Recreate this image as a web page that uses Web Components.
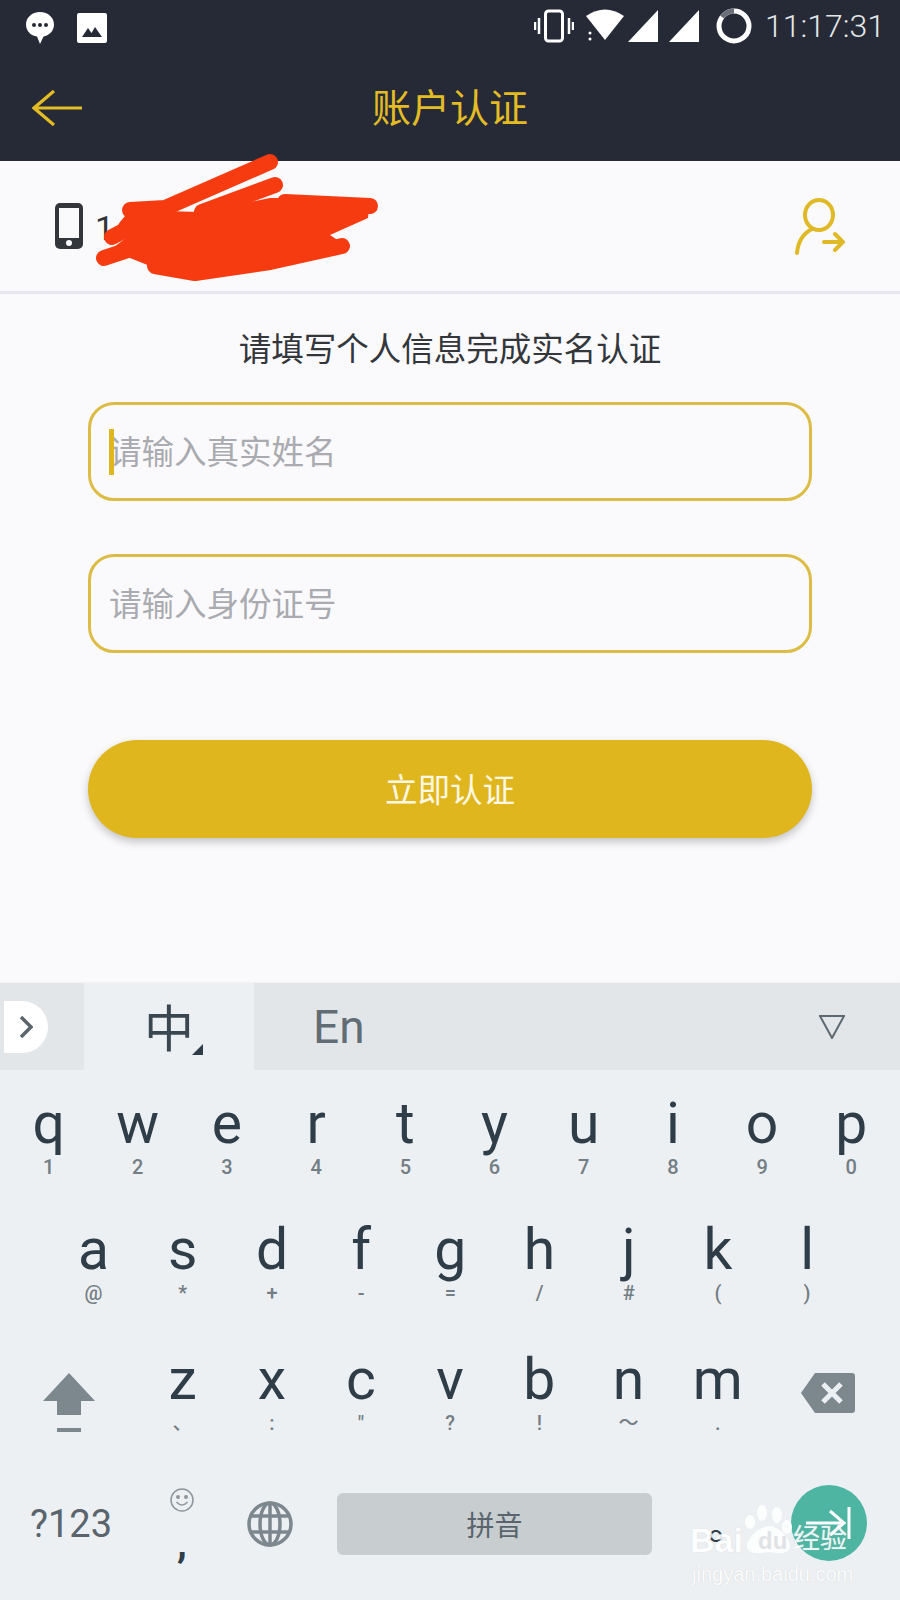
<!DOCTYPE html>
<html lang="zh">
<head>
<meta charset="utf-8">
<style>
  html, body { margin: 0; padding: 0; }
  body { width: 900px; height: 1600px; overflow: hidden; background: #fafafc; font-family: Roboto, "Noto Sans CJK SC", sans-serif; position: relative; }
</style>
</head>
<body>
<app-header title="账户认证"></app-header>
<account-row></account-row>
<auth-form></auth-form>
<ime-keyboard></ime-keyboard>
<baidu-mark></baidu-mark>

<script>
const CJK = 'Roboto, "Noto Sans CJK SC", sans-serif';

class AppHeader extends HTMLElement {
    constructor() {
        super();
        this.attachShadow({mode: 'open'});
        this.shadowRoot.innerHTML = `
        <style>
            :host { display: block; height: 161px; background: #252a36; color: #fff; }
            .status { height: 52px; display: flex; align-items: center; padding: 0 15px 0 25px; }
            .left { display: flex; gap: 22px; align-items: center; padding-top: 3px; }
            .right { margin-left: auto; display: flex; align-items: center; }
            .time { font: 300 32px Roboto, sans-serif; color: #e6e7e9; margin-left: 13px; }
            .bar { height: 109px; display: flex; align-items: center; position: relative; box-sizing: border-box; padding-bottom: 3px; }
            .back { margin-left: 32px; margin-top: 6px; }
            h1 { position: absolute; left: 0; right: 0; margin: 0; text-align: center; font: 400 39px ${CJK}; color: #e3bc25; }
        </style>
        <div class="status">
            <div class="left">
                <svg width="30" height="34" viewBox="0 0 30 34"><path d="M15 1C7 1 1 6.500 1 13.500 1 20 6 25 12 25.500L15 33 18.500 25.500C24.500 24.500 29 19.500 29 13.500 29 6.500 23 1 15 1Z" fill="#fff"/><circle cx="9" cy="14" r="2" fill="#252a36"/><circle cx="15" cy="14" r="2" fill="#252a36"/><circle cx="21" cy="14" r="2" fill="#252a36"/></svg>
                <svg width="30" height="30" viewBox="0 0 30 30"><rect width="30" height="30" rx="2" fill="#fff"/><path d="M5 24L11 15 14.500 20 18 14 25 24Z" fill="#252a36"/></svg>
            </div>
            <div class="right">
                <svg width="40" height="34" viewBox="0 0 40 34" fill="none" stroke="#fff"><rect x="11.500" y="2" width="17" height="30" rx="3" stroke-width="3"/><path d="M5 9v16M1 13v8M35 9v16M39 13v8" stroke-width="2.500"/></svg>
                <svg style="margin-left:12px" width="38" height="34" viewBox="0 0 38 34"><path d="M0 7Q19 -6 38 7L19 31Z" fill="#fff"/><circle cx="4" cy="24" r="1.500" fill="#fff"/><circle cx="4" cy="30" r="1.500" fill="#fff"/></svg>
                <svg style="margin-left:4px" width="30" height="32" viewBox="0 0 30 32"><path d="M30 0V32H0Z" fill="#fff"/></svg>
                <svg style="margin-left:11px" width="30" height="32" viewBox="0 0 30 32"><path d="M30 0V32H0Z" fill="#fff"/></svg>
                <svg style="margin-left:17px" width="36" height="36" viewBox="0 0 36 36" fill="none"><circle cx="18" cy="18" r="15" stroke="#fff" stroke-width="5"/><path d="M18 3A15 15 0 0 0 6 9" stroke="#6d7079" stroke-width="5"/></svg>
                <span class="time">11:17:31</span>
            </div>
        </div>
        <div class="bar">
            <svg class="back" width="50" height="38" viewBox="0 0 50 38" fill="none" stroke="#e3bc25" stroke-width="3.200"><path d="M22 2L2 19 22 36M2 19H50"/></svg>
            <h1></h1>
        </div>`;
    }

    connectedCallback() {
        this.shadowRoot.querySelector('h1').textContent = this.getAttribute('title');
    }
}

class AccountRow extends HTMLElement {
    constructor() {
        super();
        this.attachShadow({mode: 'open'});
        this.shadowRoot.innerHTML = `
        <style>
            :host { display: block; height: 133px; box-sizing: border-box; border-bottom: 3px solid #e6e6ee; position: relative; }
            .row { height: 100%; display: flex; align-items: center; padding: 0 55px 0 55px; box-sizing: border-box; }
            .num { font: 400 34px Roboto, sans-serif; color: #33363b; margin-left: 12px; padding-top: 4px; }
            .user { margin-left: auto; margin-top: 2px; }
            .scribble { position: absolute; left: 80px; top: -11px; }
        </style>
        <div class="row">
            <svg width="28" height="46" viewBox="0 0 28 46"><rect width="28" height="46" rx="5" fill="#33363b"/><rect x="4" y="5" width="20" height="30" fill="#fafafc"/><circle cx="14" cy="40" r="3" fill="#fafafc"/></svg>
            <span class="num">1</span>
            <svg class="user" width="50" height="58" viewBox="0 0 50 58" fill="none" stroke="#e0b927" stroke-width="4" stroke-linecap="round"><ellipse cx="24" cy="17" rx="14" ry="15"/><path d="M17 31C7 36 3 44 2 55M29 44H47M40 36L48 44 40 52" /></svg>
        </div>
        <svg class="scribble" width="320" height="140" viewBox="0 0 320 140" fill="none" stroke="#f73b10" stroke-width="16" stroke-linecap="round" stroke-linejoin="round">
            <path fill="#f73b10" stroke="none" d="M50 60L120 62 190 48 205 48 290 50 288 68 250 85 265 95 200 113 115 125 75 118 30 100 50 85 30 88 40 72Z"/>
            <path d="M190 12L85 58 50 60"/>
            <path d="M195 35L122 62"/>
            <path d="M205 52L290 56"/>
            <path d="M32 87L55 75"/>
            <path d="M24 108L60 96"/>
            <path d="M262 96L190 112 115 123 75 116"/>
        </svg>`;
    }
}

class FieldBox extends HTMLElement {
    constructor() {
        super();
        this.attachShadow({mode: 'open'});
        this.shadowRoot.innerHTML = `
        <style>
            :host { display: block; height: 99px; box-sizing: border-box; border: 3px solid #dcbc45; border-radius: 26px; position: relative; }
            .wrap { height: 100%; display: flex; align-items: center; padding: 0 0 4px 18px; box-sizing: border-box; font: 400 32.500px ${CJK}; color: #a9abb0; }
            .caret { position: absolute; left: 18px; top: 24px; width: 5px; height: 46px; background: #e0b61f; display: none; }
            :host([focused]) .caret { display: block; }
        </style>
        <div class="wrap"><slot></slot></div>
        <div class="caret"></div>`;
    }
}

class AuthForm extends HTMLElement {
    constructor() {
        super();
        this.attachShadow({mode: 'open'});
        this.shadowRoot.innerHTML = `
        <style>
            :host { display: block; padding: 33px 88px 0; height: 689px; box-sizing: border-box; }
            p { margin: 0 0 29px; height: 46px; text-align: center; font: 400 32.500px/46px ${CJK}; color: #33363b; }
            field-box + field-box { margin-top: 53px; }
            .go { margin-top: 87px; height: 98px; border-radius: 50px; background: #e0b61f; color: #fdf8e4; display: flex; align-items: center; justify-content: center; box-sizing: border-box; padding-bottom: 4px; font: 400 32.500px ${CJK}; box-shadow: 0 4px 8px rgba(0,0,0,.22); }
        </style>
        <p>请填写个人信息完成实名认证</p>
        <field-box focused>请输入真实姓名</field-box>
        <field-box>请输入身份证号</field-box>
        <div class="go">立即认证</div>`;
    }
}

class KeyCap extends HTMLElement {
    constructor() {
        super();
        this.attachShadow({mode: 'open'});
        this.shadowRoot.innerHTML = `
        <style>
            :host { display: flex; flex-direction: column; align-items: center; width: 89.200px; height: 126px; font-family: ${CJK}; }
            .main { font-size: 57px; font-weight: 400; line-height: 57px; height: 57px; color: #2e3d47; margin-top: 25px; }
            .sub { font-size: 20px; font-weight: 500; line-height: 24px; color: #737d84; margin-top: 3px; }
        </style>
        <div class="main"></div><div class="sub"></div>`;
    }

    connectedCallback() {
        this.shadowRoot.querySelector('.main').textContent = this.getAttribute('k');
        this.shadowRoot.querySelector('.sub').textContent = this.getAttribute('s');
    }
}

class ImeKeyboard extends HTMLElement {
    constructor() {
        super();
        this.attachShadow({mode: 'open'});
        const row = (keys) => keys.map(([k, s]) => `<key-cap k="${k}" s="${s}"></key-cap>`).join('');
        this.shadowRoot.innerHTML = `
        <style>
            :host { display: block; height: 620px; background: #edf0f3; box-shadow: 0 -1px 2px rgba(0,0,0,.04); }
            .tabs { height: 87px; background: #e3e6e9; display: flex; align-items: center; position: relative; }
            .expand { width: 44px; height: 52px; margin-left: 4px; background: #fff; border-radius: 0 26px 26px 0; display: flex; align-items: center; justify-content: center; flex: none; }
            .zh { margin-left: 36px; width: 170px; height: 87px; background: #edf0f3; display: flex; align-items: center; justify-content: center; font: 400 50px ${CJK}; color: #3a4750; position: relative; box-sizing: border-box; padding-bottom: 4px; }
            .zh::after { content: ''; position: absolute; left: 108px; top: 61px; border-left: 11px solid transparent; border-bottom: 11px solid #2e3d47; }
            .en { margin-left: 59px; font: 400 46px Roboto, sans-serif; color: #616c74; }
            .drop { margin-left: auto; margin-right: 55px; }
            .row { display: flex; }
            .r1 { padding-left: 4px; height: 126px; }
            .r2 { padding-left: 49px; height: 130px; }
            .r3 { height: 130px; align-items: flex-start; }
            .fn { width: 138px; flex: none; display: flex; justify-content: center; padding-top: 47px; height: 83px; }
            .del { width: 0; flex: 1; display: flex; justify-content: center; padding: 47px 6px 0 0; }
            .r4 { height: 130px; margin-top: 3px; align-items: center; position: relative; }
            .sym { width: 142px; text-align: center; font: 400 38px Roboto, sans-serif; color: #59646c; flex: none; }
            .comma { width: 80px; flex: none; text-align: center; color: #2e3d47; display: flex; flex-direction: column; align-items: center; height: 76px; margin-top: 4px; font: 700 40px/40px Roboto, sans-serif; }
            .comma svg { margin-bottom: 12px; }
            .globe { width: 96px; flex: none; display: flex; justify-content: center; }
            .space { width: 315px; height: 62px; border-radius: 6px; background: #c8cdd0; display: flex; align-items: center; justify-content: center; font: 400 28px ${CJK}; color: #59646c; flex: none; margin-left: 19px; }
            .dot { width: 130px; flex: none; box-sizing: border-box; padding-left: 22px; text-align: center; font: 400 40px ${CJK}; color: #2e3d47; margin-top: -4px; }
            .enter { position: absolute; left: 791px; top: 26px; width: 76px; height: 76px; border-radius: 50%; background: #4eb5a3; display: flex; align-items: center; justify-content: center; }
        </style>
        <div class="tabs">
            <div class="expand"><svg width="14" height="24" viewBox="0 0 14 24" fill="none" stroke="#5a656c" stroke-width="3.500"><path d="M2 2L12 12 2 22"/></svg></div>
            <div class="zh">中</div>
            <div class="en">En</div>
            <svg class="drop" width="26" height="24" viewBox="0 0 26 24" fill="none" stroke="#5d6870" stroke-width="2"><path d="M1 1H25L13 23Z"/></svg>
        </div>
        <div class="row r1">${row([['q','1'],['w','2'],['e','3'],['r','4'],['t','5'],['y','6'],['u','7'],['i','8'],['o','9'],['p','0']])}</div>
        <div class="row r2">${row([['a','@'],['s','*'],['d','+'],['f','-'],['g','='],['h','/'],['j','#'],['k','('],['l',')']])}</div>
        <div class="row r3">
            <div class="fn"><svg width="52" height="60" viewBox="0 0 52 60"><path d="M26 0L52 28H38V42H14V28H0Z" fill="#7d878e"/><rect x="14" y="55" width="24" height="4" fill="#7d878e"/></svg></div>
            ${row([['z','、'],['x',':'],['c','&quot;'],['v','?'],['b','!'],['n','～'],['m','.']])}
            <div class="del"><svg width="54" height="40" viewBox="0 0 54 40"><path d="M14 0H51Q54 0 54 3V37Q54 40 51 40H14L0 20Z" fill="#7d878e"/><path d="M22 11L40 29M40 11L22 29" stroke="#edf0f3" stroke-width="5"/></svg></div>
        </div>
        <div class="row r4">
            <div class="sym">?123</div>
            <div class="comma"><svg width="24" height="24" viewBox="0 0 24 24" fill="none" stroke="#8d969c" stroke-width="1.500"><circle cx="12" cy="12" r="11"/><circle cx="8" cy="9" r="1.200" fill="#8d969c"/><circle cx="16" cy="9" r="1.200" fill="#8d969c"/><path d="M6.500 14Q12 20 17.500 14"/></svg>,</div>
            <div class="globe"><svg width="46" height="46" viewBox="0 0 46 46" fill="none" stroke="#7d878e" stroke-width="3.500"><circle cx="23" cy="23" r="21"/><ellipse cx="23" cy="23" rx="10" ry="21"/><path d="M23 2V44M4 15H42M4 31H42"/></svg></div>
            <div class="space">拼音</div>
            <div class="dot">。</div>
            <div class="enter"><svg width="46" height="40" viewBox="0 0 46 40" fill="none" stroke="#fff" stroke-width="3"><path d="M0 20H38M24 8L38 20 24 32M43 4V36"/></svg></div>
        </div>`;
    }
}

class BaiduMark extends HTMLElement {
    constructor() {
        super();
        this.attachShadow({mode: 'open'});
        this.shadowRoot.innerHTML = `
        <style>
            :host { display: block; position: absolute; left: 690px; top: 1500px; width: 170px; height: 90px; color: #fff; font-family: ${CJK}; opacity: .88; }
            span { position: absolute; text-shadow: 0 0 1px #c4c8cb; white-space: nowrap; }
            .bai { left: 0; top: 19px; font: 700 34px/42px "Liberation Sans", sans-serif; }
            .du { left: 68px; top: 27px; font: 700 24px/28px "Liberation Sans", sans-serif; color: #dfe2e5; text-shadow: none; }
            .cn { left: 103px; top: 21px; font: 400 27px/36px ${CJK}; }
            .url { left: 2px; top: 62px; font: 400 20px/24px "Liberation Sans", sans-serif; }
            svg { position: absolute; left: 54px; top: 4px; }
        </style>
        <svg width="50" height="52" viewBox="0 0 50 52" fill="#fff"><ellipse cx="6" cy="18" rx="5" ry="7"/><ellipse cx="18" cy="9" rx="5" ry="8"/><ellipse cx="33" cy="11" rx="5" ry="8"/><ellipse cx="43" cy="23" rx="5" ry="7"/><path d="M25 22C16 22 3 34 3 42 3 50 14 50 25 48 36 50 46 50 46 42 46 34 34 22 25 22Z"/></svg>
        <span class="bai">Bai</span>
        <span class="du">du</span>
        <span class="cn">经验</span>
        <span class="url">jingyan.baidu.com</span>`;
    }
}

customElements.define('app-header', AppHeader);
customElements.define('account-row', AccountRow);
customElements.define('field-box', FieldBox);
customElements.define('auth-form', AuthForm);
customElements.define('key-cap', KeyCap);
customElements.define('ime-keyboard', ImeKeyboard);
customElements.define('baidu-mark', BaiduMark);
</script>
</body>
</html>
